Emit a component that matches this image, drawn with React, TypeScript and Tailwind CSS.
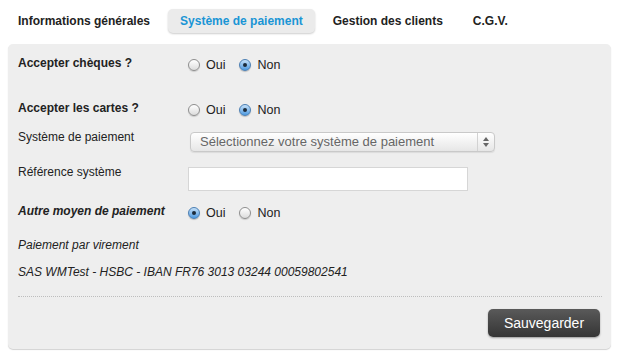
const Radio = ({checked}: {checked: boolean}) => (
    <span
        className={
            checked
                ? "relative inline-block w-[12px] h-[12px] rounded-full border border-[#4b7fb3] bg-gradient-to-b from-[#c4e0f8] to-[#4d9ae0] shadow-[0_1px_1px_rgba(0,0,0,0.2)]"
                : "relative inline-block w-[12px] h-[12px] rounded-full border border-[#8e8e8e] bg-gradient-to-b from-[#ffffff] to-[#dcdcdc] shadow-[0_1px_1px_rgba(0,0,0,0.15)]"
        }
    >
        {checked && (
            <span className="absolute left-[3px] top-[3px] w-[4px] h-[4px] rounded-full bg-[#1c2b3a]"/>
        )}
    </span>
);

const OuiNon = ({oui}: {oui: boolean}) => (
    <div className="flex items-center h-[16px] mt-[2px] -mb-[2px] text-[12.5px] text-[#222]">
        <Radio checked={oui}/>
        <span className="ml-[6px]">Oui</span>
        <span className="ml-[14px] flex items-center"><Radio checked={!oui}/></span>
        <span className="ml-[6px]">Non</span>
    </div>
);

const tabs = ["Informations générales", "Système de paiement", "Gestion des clients", "C.G.V."];

export default function App() {
    return (
        <div className="w-[620px] h-[361px] bg-white font-['Liberation_Sans',Arial,sans-serif] text-[#222]">
            <div className="flex pt-[9px] pl-[6px] gap-[6px]">
                {tabs.map((tab, index) => (
                    <div
                        key={index}
                        className={
                            index === 1
                                ? "h-[24px] px-[12px] flex items-center rounded-[5px] bg-[#ebebeb] shadow-[0_1px_2px_rgba(0,0,0,0.2)] text-[12px] font-bold text-[#1a95d5]"
                                : "h-[24px] px-[12px] flex items-center text-[12px] font-bold text-[#222]"
                        }
                    >
                        {tab}
                    </div>
                ))}
            </div>

            <div className="mt-[11px] ml-[8px] w-[603px] h-[305px] bg-[#eeeeee] rounded-[5px] shadow-[0_1px_1px_rgba(0,0,0,0.18)] pt-[11px] pl-[10px] pr-[9px]">
                <div className="flex items-start">
                    <div className="w-[170px] leading-[16px] text-[12px] font-bold">Accepter chèques ?</div>
                    <OuiNon oui={false}/>
                </div>

                <div className="flex items-start mt-[29px]">
                    <div className="w-[170px] leading-[16px] text-[12px] font-bold">Accepter les cartes ?</div>
                    <OuiNon oui={false}/>
                </div>

                <div className="flex items-start mt-[13px]">
                    <div className="w-[172px] leading-[16px] text-[12px]">Système de paiement</div>
                    <div className="mt-[3px] w-[305px] h-[20px] flex items-center rounded-[4px] border border-[#c9c9c9] bg-gradient-to-b from-[#ffffff] to-[#e6e6e6] shadow-[0_1px_1px_rgba(0,0,0,0.08)]">
                        <span className="flex-1 pl-[9px] text-[13px] text-[#666] leading-[16px]">Sélectionnez votre système de paiement</span>
                        <span className="w-[17px] h-full border-l border-[#d2d2d2] flex flex-col items-center justify-center gap-[2px]">
                            <svg width="6" height="4" viewBox="0 0 6 4"><path d="M3 0 L6 4 L0 4 Z" fill="#666"/></svg>
                            <svg width="6" height="4" viewBox="0 0 6 4"><path d="M0 0 L6 0 L3 4 Z" fill="#666"/></svg>
                        </span>
                    </div>
                </div>

                <div className="flex items-start mt-[12px]">
                    <div className="w-[170px] leading-[16px] text-[12px]">Référence système</div>
                    <div className="mt-[3px] w-[280px] h-[24px] bg-white border border-[#d6d6d6]"/>
                </div>

                <div className="flex items-start mt-[12px]">
                    <div className="w-[170px] leading-[16px] text-[12px] font-bold italic">Autre moyen de paiement</div>
                    <OuiNon oui={true}/>
                </div>

                <div className="mt-[18px] leading-[16px] text-[12px] italic">Paiement par virement</div>
                <div className="mt-[11px] leading-[16px] text-[12px] italic">SAS WMTest - HSBC - IBAN FR76 3013 03244 00059802541</div>

                <div className="mt-[16px] border-t border-dotted border-[#bdbdbd]"/>

                <div className="flex justify-end mt-[12px] pr-[2px]">
                    <button className="h-[28px] w-[112px] rounded-[5px] bg-gradient-to-b from-[#5a5a5a] to-[#353535] text-white text-[14px] shadow-[0_1px_2px_rgba(0,0,0,0.35)]">
                        Sauvegarder
                    </button>
                </div>
            </div>
        </div>
    );
}
